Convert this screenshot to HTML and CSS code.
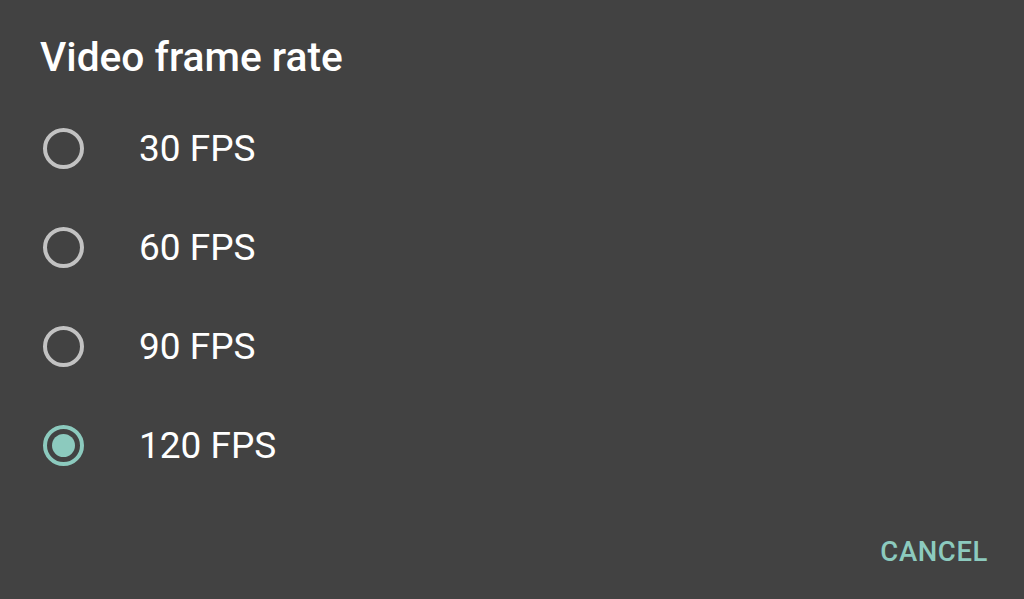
FILE: index.html
```html
<!DOCTYPE html>
<html>
<head>
<meta charset="utf-8">
<link rel="stylesheet" href="styles.css">
</head>
<body>
<div class="dialog">
  <h1 class="title">Video frame rate</h1>
  <div class="options">
    <div class="option"><span class="radio"></span><span class="label">30 FPS</span></div>
    <div class="option"><span class="radio"></span><span class="label">60 FPS</span></div>
    <div class="option"><span class="radio"></span><span class="label">90 FPS</span></div>
    <div class="option"><span class="radio checked"></span><span class="label">120 FPS</span></div>
  </div>
  <div class="actions"><span class="btn">CANCEL</span></div>
</div>
</body>
</html>
```
FILE: styles.css
```css
html, body {
  margin: 0;
  padding: 0;
  background: #424242;
  width: 1024px;
  height: 599px;
  overflow: hidden;
  font-family: Roboto, "Noto Sans", sans-serif;
}
.dialog {
  display: flex;
  flex-direction: column;
  height: 599px;
  box-sizing: border-box;
  padding: 32px 36px 0 40px;
}
.title {
  margin: 0;
  font-size: 40.7px;
  font-weight: 500;
  color: #ffffff;
  line-height: 50px;
}
.options {
  display: flex;
  flex-direction: column;
  margin-top: 17px;
}
.option {
  display: flex;
  align-items: center;
  height: 99px;
}
.radio {
  width: 33px;
  height: 33px;
  border: 4px solid #c2c2c2;
  border-radius: 50%;
  margin-left: 3px;
  position: relative;
  flex: none;
}
.radio.checked {
  border-color: #8ccabe;
}
.radio.checked::after {
  content: "";
  position: absolute;
  left: 50%;
  top: 50%;
  width: 23px;
  height: 23px;
  margin: -11.5px 0 0 -11.5px;
  border-radius: 50%;
  background: #8ccabe;
}
.label {
  margin-left: 55px;
  font-size: 37px;
  color: #ffffff;
}
.actions {
  display: flex;
  justify-content: flex-end;
  margin-top: 40px;
}
.btn {
  font-size: 27.5px;
  font-weight: 500;
  color: #8ccabe;
  letter-spacing: 0.6px;
}
```
